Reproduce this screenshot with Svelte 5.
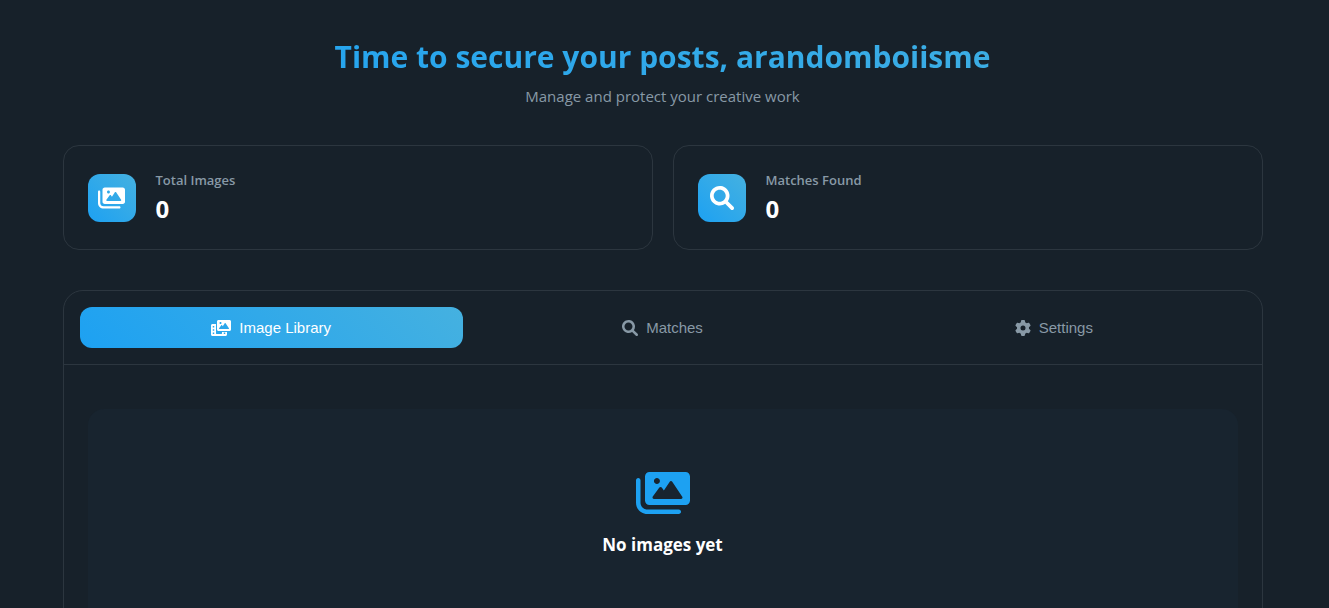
<script>
  const icons = {
    images: {
      box: '0 0 576 512',
      path: 'M528 32H144c-26.51 0-48 21.49-48 48v256c0 26.51 21.49 48 48 48H528c26.51 0 48-21.49 48-48v-256C576 53.49 554.5 32 528 32zM223.1 96c17.68 0 32 14.33 32 32S241.7 160 223.1 160c-17.67 0-32-14.33-32-32S206.3 96 223.1 96zM494.1 311.6C491.3 316.8 485.9 320 480 320H192c-6.023 0-11.53-3.379-14.26-8.75c-2.73-5.367-2.215-11.81 1.332-16.68l70-96C252.1 194.4 256.9 192 262 192c5.111 0 9.916 2.441 12.93 6.574l22.35 30.66l62.74-94.11C362.1 130.7 367.1 128 373.3 128c5.348 0 10.34 2.672 13.31 7.125l106.7 160C496.6 300 496.9 306.3 494.1 311.6zM456 432H120c-39.7 0-72-32.3-72-72v-240C48 106.8 37.25 96 24 96S0 106.8 0 120v240C0 426.2 53.83 480 120 480h336c13.25 0 24-10.75 24-24S469.3 432 456 432z'
    },
    search: {
      box: '0 0 512 512',
      path: 'M500.3 443.7l-119.7-119.7c27.22-40.41 40.65-90.9 33.46-144.7C401.8 87.79 326.8 13.32 235.2 1.723C99.01-15.51-15.51 99.01 1.724 235.2c11.6 91.64 86.08 166.7 177.6 178.9c53.8 7.189 104.3-6.236 144.7-33.46l119.7 119.7c15.62 15.62 40.95 15.62 56.57 0C515.9 484.7 515.9 459.3 500.3 443.7zM79.1 208c0-70.58 57.42-128 128-128s128 57.42 128 128c0 70.58-57.42 128-128 128S79.1 278.6 79.1 208z'
    },
    gear: {
      box: '0 0 512 512',
      path: 'M495.9 166.6c3.2 8.7 .5 18.4-6.4 24.6l-43.3 39.4c1.1 8.3 1.7 16.8 1.7 25.4s-.6 17.1-1.7 25.4l43.3 39.4c6.9 6.2 9.6 15.9 6.4 24.6c-4.4 11.9-9.7 23.3-15.8 34.3l-4.7 8.1c-6.6 11-14 21.4-22.1 31.2c-5.9 7.2-15.7 9.6-24.5 6.8l-55.7-17.7c-13.4 10.3-28.2 18.9-44 25.4l-12.5 57.1c-2 9.1-9 16.3-18.2 17.8c-13.8 2.3-28 3.5-42.5 3.5s-28.7-1.2-42.5-3.5c-9.2-1.5-16.2-8.7-18.2-17.8l-12.5-57.1c-15.8-6.5-30.6-15.1-44-25.4L83.1 425.9c-8.8 2.8-18.6 .3-24.5-6.8c-8.1-9.8-15.5-20.2-22.1-31.2l-4.7-8.1c-6.1-11-11.4-22.4-15.8-34.3c-3.2-8.7-.5-18.4 6.4-24.6l43.3-39.4C64.6 273.1 64 264.6 64 256s.6-17.1 1.7-25.4L22.4 191.2c-6.9-6.2-9.6-15.9-6.4-24.6c4.4-11.9 9.7-23.3 15.8-34.3l4.7-8.1c6.6-11 14-21.4 22.1-31.2c5.9-7.2 15.7-9.6 24.5-6.8l55.7 17.7c13.4-10.3 28.2-18.9 44-25.4l12.5-57.1c2-9.1 9-16.3 18.2-17.8C227.3 1.2 241.5 0 256 0s28.7 1.2 42.5 3.5c9.2 1.5 16.2 8.7 18.2 17.8l12.5 57.1c15.8 6.5 30.6 15.1 44 25.4l55.7-17.7c8.8-2.8 18.6-.3 24.5 6.8c8.1 9.8 15.5 20.2 22.1 31.2l4.7 8.1c6.1 11 11.4 22.4 15.8 34.3zM256 336a80 80 0 1 0 0-160 80 80 0 1 0 0 160z'
    },
    film: {
      box: '0 0 640 512',
      path: 'M352 432c0 8.836-7.164 16-16 16H176c-8.838 0-16-7.164-16-16L160 128H48C21.49 128 0 149.5 0 176v288c0 26.51 21.49 48 48 48h416c26.51 0 48-21.49 48-48L512 384h-160L352 432zM104 439c0 4.969-4.031 9-9 9h-30c-4.969 0-9-4.031-9-9v-30c0-4.969 4.031-9 9-9h30c4.969 0 9 4.031 9 9V439zM104 335c0 4.969-4.031 9-9 9h-30c-4.969 0-9-4.031-9-9v-30c0-4.969 4.031-9 9-9h30c4.969 0 9 4.031 9 9V335zM104 231c0 4.969-4.031 9-9 9h-30c-4.969 0-9-4.031-9-9v-30C56 196 60.03 192 65 192h30c4.969 0 9 4.031 9 9V231zM408 409c0-4.969 4.031-9 9-9h30c4.969 0 9 4.031 9 9v30c0 4.969-4.031 9-9 9h-30c-4.969 0-9-4.031-9-9V409zM592 0H240C213.5 0 192 21.49 192 48v256c0 26.51 21.49 48 48 48h352c26.51 0 48-21.49 48-48v-256C640 21.49 618.5 0 592 0zM304 64c17.68 0 32 14.33 32 32s-14.32 32-32 32C286.3 128 272 113.7 272 96S286.3 64 304 64zM574.1 279.6C571.3 284.8 565.9 288 560 288H272C266 288 260.5 284.6 257.7 279.3C255 273.9 255.5 267.4 259.1 262.6l70-96C332.1 162.4 336.9 160 342 160c5.11 0 9.914 2.441 12.93 6.574l22.35 30.66l62.74-94.11C442.1 98.67 447.1 96 453.3 96c5.348 0 10.34 2.672 13.31 7.125l106.7 160C576.6 268 576.9 274.3 574.1 279.6z'
    }
  };

  const stats = [
    { label: 'Total Images', value: 0, icon: 'images' },
    { label: 'Matches Found', value: 0, icon: 'search' }
  ];

  const tabs = [
    { id: 'library', label: 'Image Library', icon: 'film' },
    { id: 'matches', label: 'Matches', icon: 'search' },
    { id: 'settings', label: 'Settings', icon: 'gear' }
  ];

  let active = $state('library');
</script>

{#snippet icon(name)}
  <svg class="icon" viewBox={icons[name].box} aria-hidden="true"><path d={icons[name].path} /></svg>
{/snippet}

<main class="page">
  <div class="container">
    <header class="header">
      <h1>Time to secure your posts, arandomboiisme</h1>
      <p>Manage and protect your creative work</p>
    </header>

    <section class="stats">
      {#each stats as stat}
        <article class="stat">
          <div class="badge">{@render icon(stat.icon)}</div>
          <div>
            <h2>{stat.label}</h2>
            <p>{stat.value}</p>
          </div>
        </article>
      {/each}
    </section>

    <section class="panel">
      <div class="tabs" role="tablist">
        {#each tabs as tab}
          <button
            type="button"
            role="tab"
            class="tab"
            class:active={active === tab.id}
            aria-selected={active === tab.id}
            onclick={() => (active = tab.id)}
          >
            {@render icon(tab.icon)}
            <span>{tab.label}</span>
          </button>
        {/each}
      </div>
      <div class="content">
        <div class="empty">
          {@render icon('images')}
          <h3>No images yet</h3>
        </div>
      </div>
    </section>
  </div>
</main>

<style>
  :global(body) {
    margin: 0;
    background: #17212a;
  }

  .page {
    box-sizing: border-box;
    height: 100vh;
    overflow: hidden;
    padding: 32px 24px 0 20px;
    background: #17212a;
    color: #fff;
    font-family: 'Segoe UI', 'Open Sans', 'Noto Sans', sans-serif;
  }

  .container {
    max-width: 1200px;
    margin: 0 auto;
  }

  h1, h2, h3, p {
    margin: 0;
  }

  .icon {
    display: block;
    height: 1em;
    fill: currentColor;
    fill-rule: evenodd;
  }

  .header {
    margin-bottom: 37px;
    text-align: center;
  }

  .header h1 {
    margin-bottom: 2px;
    font-size: 30px;
    line-height: 50px;
    font-weight: 700;
    background: linear-gradient(45deg, #1da1f2, #45b1e0);
    background-clip: text;
    color: transparent;
  }

  .header p {
    font-size: 15px;
    line-height: 24px;
    color: #8899a6;
  }

  .stats {
    display: grid;
    grid-template-columns: repeat(2, 1fr);
    gap: 20px;
    margin-bottom: 40px;
  }

  .stat {
    display: flex;
    align-items: center;
    gap: 20px;
    padding: 24px;
    border: 1px solid #2c363f;
    border-radius: 16px;
  }

  .badge {
    display: grid;
    place-items: center;
    width: 48px;
    height: 48px;
    border-radius: 12px;
    background: linear-gradient(45deg, #1da1f2, #45b1e0);
    font-size: 24px;
  }

  .stat h2 {
    margin-bottom: 3px;
    font-size: 13px;
    line-height: 20px;
    font-weight: 600;
    color: #8899a6;
  }

  .stat p {
    font-size: 24px;
    line-height: 32px;
    font-weight: 700;
  }

  .panel {
    border: 1px solid #2c363f;
    border-radius: 20px;
  }

  .tabs {
    display: grid;
    grid-template-columns: repeat(3, 1fr);
    gap: 8px;
    padding: 16px;
    border-bottom: 1px solid #2c363f;
  }

  .tab {
    display: flex;
    align-items: center;
    justify-content: center;
    gap: 8px;
    padding: 12px;
    border: 0;
    border-radius: 12px;
    background: transparent;
    color: #8899a6;
    font-family: Arial, 'Liberation Sans', sans-serif;
    font-size: 15px;
    line-height: 17px;
    cursor: pointer;
  }

  .tab .icon {
    height: 16px;
  }

  .tab.active {
    background: linear-gradient(45deg, #1da1f2, #45b1e0);
    color: #fff;
  }

  .content {
    padding: 44px 24px;
  }

  .empty {
    display: flex;
    flex-direction: column;
    align-items: center;
    gap: 16px;
    min-height: 200px;
    padding: 60px 20px;
    border-radius: 16px;
    background: #18242f;
  }

  .empty .icon {
    font-size: 48px;
    color: #1da1f2;
  }

  .empty h3 {
    font-size: 17px;
    line-height: 24px;
    font-weight: 700;
  }
</style>
